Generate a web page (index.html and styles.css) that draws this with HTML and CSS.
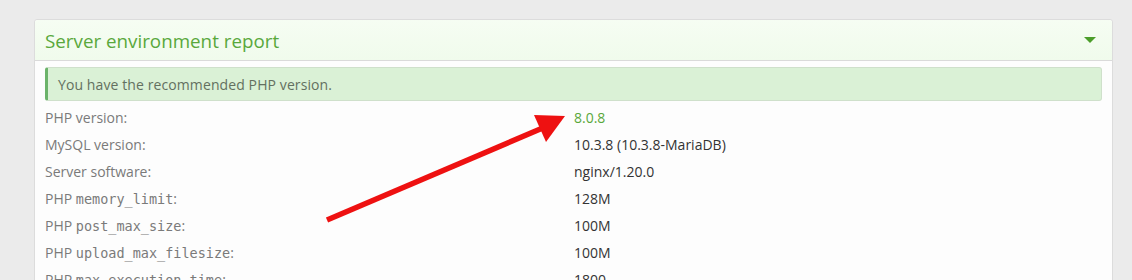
FILE: index.html
```html
<!DOCTYPE html>
<html>
<head>
<meta charset="utf-8">
<link rel="stylesheet" href="styles.css">
</head>
<body>
<div class="card">
  <div class="card-header">
    <span class="title">Server environment report</span>
    <span class="caret"></span>
  </div>
  <div class="card-body">
    <div class="alert">You have the recommended PHP version.</div>
    <div class="rows">
      <div class="row"><span class="label">PHP version:</span><span class="value ok">8.0.8</span></div>
      <div class="row"><span class="label">MySQL version:</span><span class="value">10.3.8 (10.3.8-MariaDB)</span></div>
      <div class="row"><span class="label">Server software:</span><span class="value">nginx/1.20.0</span></div>
      <div class="row"><span class="label">PHP <code>memory_limit</code>:</span><span class="value">128M</span></div>
      <div class="row"><span class="label">PHP <code>post_max_size</code>:</span><span class="value">100M</span></div>
      <div class="row"><span class="label">PHP <code>upload_max_filesize</code>:</span><span class="value">100M</span></div>
      <div class="row"><span class="label">PHP <code>max_execution_time</code>:</span><span class="value">1800</span></div>
    </div>
  </div>
</div>
<svg class="arrow" width="1132" height="280" viewBox="0 0 1132 280">
  <line x1="327" y1="220" x2="545" y2="127" stroke="#ee1111" stroke-width="5.5" stroke-linecap="butt"/>
  <polygon points="565,116 534,115 546,142" fill="#ee1111"/>
</svg>
</body>
</html>
```
FILE: styles.css
```css
html, body {
  margin: 0;
  padding: 0;
  background: #ebebeb;
  font-family: "Open Sans", "Noto Sans", sans-serif;
  height: 280px;
  overflow: hidden;
}
.card {
  margin: 19px 19px 0 34px;
  background: #fdfdfd;
  border: 1px solid #dcdcdc;
  border-radius: 3px 3px 0 0;
  height: 300px;
}
.card-header {
  height: 40px;
  display: flex;
  align-items: center;
  justify-content: space-between;
  padding: 0 16px 0 10px;
  background: linear-gradient(#f6fdf3, #f0fbec);
  border-bottom: 1px solid #dadada;
  border-radius: 3px 3px 0 0;
}
.title {
  color: #59a83c;
  font-size: 18.8px;
  margin-top: 2px;
}
.caret {
  width: 0;
  height: 0;
  border-left: 6.5px solid transparent;
  border-right: 6.5px solid transparent;
  border-top: 6.5px solid #4c9d2a;
}
.card-body {
  padding: 6px 10px 0 10px;
}
.alert {
  height: 32px;
  display: flex;
  align-items: center;
  padding-left: 10px;
  background: #daf1d6;
  border: 1px solid #cfe0cb;
  border-left: 3px solid #6bb36a;
  border-radius: 3px;
  color: #637060;
  font-size: 14px;
  letter-spacing: 0.1px;
}
.rows {
  margin-top: 3px;
}
.row {
  display: flex;
  height: 27px;
  align-items: center;
  font-size: 14px;
}
.label {
  width: 529px;
  color: #7a7a7a;
}
.label code {
  font-family: "DejaVu Sans Mono", "Liberation Mono", monospace;
  font-size: 13.5px;
  color: #7a7a7a;
}
.value {
  color: #333;
}
.value.ok {
  color: #5aa83b;
}
.arrow {
  position: absolute;
  left: 0;
  top: 0;
  pointer-events: none;
}
```
